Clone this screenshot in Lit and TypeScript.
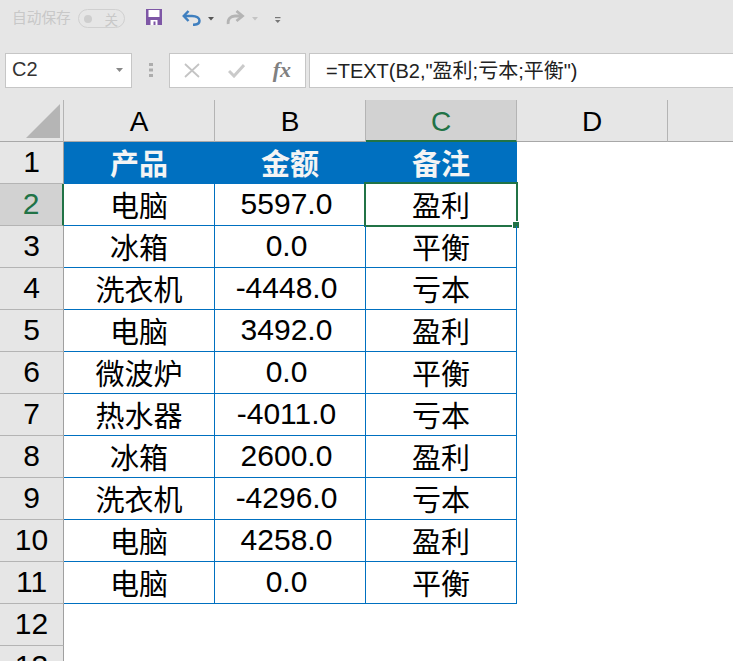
import { LitElement, html, css, svg } from "lit";
import { customElement } from "lit/decorators.js";

const rows: [string, string, string][] = [
  ["电脑", "5597.0", "盈利"],
  ["冰箱", "0.0", "平衡"],
  ["洗衣机", "-4448.0", "亏本"],
  ["电脑", "3492.0", "盈利"],
  ["微波炉", "0.0", "平衡"],
  ["热水器", "-4011.0", "亏本"],
  ["冰箱", "2600.0", "盈利"],
  ["洗衣机", "-4296.0", "亏本"],
  ["电脑", "4258.0", "盈利"],
  ["电脑", "0.0", "平衡"],
];

const icon = (w: number, h: number, body: unknown, cls = "") =>
  html`<svg class=${cls} width=${w} height=${h} viewBox="0 0 ${w} ${h}">${body}</svg>`;

@customElement("app-root")
export class AppRoot extends LitElement {
  static styles = css`
    :host {
      display: block;
      width: 733px;
      height: 661px;
      overflow: hidden;
      background: #fff;
      font-family: "Liberation Sans", "Noto Sans CJK SC", sans-serif;
      color: #000;
    }
    svg { display: block; flex: none; }
    .qat {
      height: 53px;
      background: #e6e6e6;
      display: flex;
      align-items: flex-start;
      padding: 9px 0 0 12px;
      box-sizing: border-box;
    }
    .autosave { font-size: 14.7px; line-height: 18px; color: #c8c8c8; width: 66px; }
    .toggle {
      width: 47px; height: 19px; box-sizing: border-box;
      border: 1px solid #d0d0d0; border-radius: 10px;
      display: flex; align-items: center; justify-content: space-between;
      padding: 0 6px 0 5px; color: #c8c8c8; font-size: 13.5px;
    }
    .dot { width: 8px; height: 8px; border-radius: 50%; background: #cecece; }
    .save { margin-left: 21px; }
    .undo { margin-left: 20px; }
    .c1 { margin-left: 7px; margin-top: 8px; }
    .redo { margin-left: 12px; }
    .c2 { margin-left: 7px; margin-top: 8px; }
    .more { margin-left: 17px; margin-top: 8px; }
    .fbar {
      height: 47px;
      background: #e6e6e6;
      display: flex;
      align-items: flex-start;
      padding-left: 5px;
      box-sizing: border-box;
    }
    .box {
      height: 35px; box-sizing: border-box;
      background: #fff; border: 1px solid #c6c6c6;
      display: flex; align-items: center;
    }
    .name {
      width: 127px; padding: 0 8px 2px 6px; justify-content: space-between;
      font-size: 20px; color: #333;
    }
    .grip { width: 37px; display: flex; justify-content: center; padding-top: 10px; }
    .tools { width: 137px; padding: 0 14px 0 14px; justify-content: space-between; }
    .fx { font-family: "Liberation Serif", serif; font-style: italic; font-weight: bold; font-size: 22px; color: #808080; padding-bottom: 2px; }
    .formula {
      margin-left: 3px; flex: 1; padding: 0 0 2px 16px;
      font-size: 20px; color: #222; border-right: none;
    }
    .sheet {
      display: grid;
      grid-template-columns: 64px 151px 151px 151px 151px 1fr;
      grid-auto-rows: 42px;
      font-size: 30px;
    }
    .cell, .hd {
      box-sizing: border-box;
      display: flex; align-items: center; justify-content: center;
      white-space: nowrap;
    }
    .hd {
      background: #e6e6e6;
      border-right: 1px solid #b4b4b4;
      border-bottom: 1px solid #a8a8a8;
    }
    .col { font-size: 28px; align-items: flex-end; padding-bottom: 3px; border-right-color: #b4b4b4; }
    .row { padding-bottom: 2px; border-right-color: #a0a0a0; border-bottom-color: #b4b4b4; }
    .hd.on { background: #d2d2d2; color: #217346; }
    .col.on { border-bottom: 2px solid #217346; padding-bottom: 2px; }
    .row.on { border-right: 2px solid #217346; }
    .corner { padding: 0; align-items: flex-end; justify-content: flex-end; }
    .corner svg { margin: 0 3px 3px 0; }
    .blank { background: #e6e6e6; border-bottom: 1px solid #a8a8a8; }
    .cell { position: relative; padding-bottom: 2px; }
    .cjk { font-size: 29px; }
    .num { padding-right: 7px; }
    .data { border-right: 1px solid #0070c0; border-bottom: 1px solid #0070c0; }
    .head { background: #0070c0; color: #f4f4f4; font-weight: bold; border-bottom: 0; }
    .sel {
      position: absolute; left: -2px; top: -2px; width: 154px; height: 45px;
      box-sizing: border-box; border: 2px solid #217346; pointer-events: none;
    }
    .handle {
      position: absolute; right: -4px; bottom: -4px; width: 6px; height: 6px;
      background: #217346; border: 1px solid #fff; box-sizing: content-box;
    }
    .empty { background: #fff; }
  `;

  render() {
    const caret = (c: string) => icon(6, 4, svg`<path d="M0 0h6L3 3.500z" fill=${c}/>`);
    return html`
      <div class="qat">
        <span class="autosave">自动保存</span>
        <span class="toggle"><i class="dot"></i><span>关</span></span>
        <span class="save">${icon(16, 16, svg`
          <path d="M0 0h16v16H0z" fill="#7e57a6"/>
          <path d="M2.500 1h11v7h-11z" fill="#fff"/>
          <path d="M4.500 11h7v5h-7z" fill="#fff"/><path d="M7.500 12.500h2V16h-2z" fill="#7e57a6"/>`)}</span>
        <span class="undo">${icon(19, 17, svg`
          <path d="M6.500 2 1.800 7 6.500 12" fill="none" stroke="#3f7fbf" stroke-width="2.500"/>
          <path d="M2 7h8c4.500 0 7.500 2 7.500 4.800S14.500 15.800 11 15.800" fill="none" stroke="#3f7fbf" stroke-width="2.500"/>`)}</span>
        <span class="c1">${caret("#555")}</span>
        <span class="redo">${icon(19, 17, svg`
          <path d="M10.500 2 16.500 7 10.500 12" fill="none" stroke="#b4b4b4" stroke-width="2.800"/>
          <path d="M16 7H9C4.500 7 1.500 10 2.200 15" fill="none" stroke="#b4b4b4" stroke-width="2.800"/>`)}</span>
        <span class="c2">${caret("#c4c4c4")}</span>
        <span class="more">${icon(6, 6, svg`<path d="M0 0h5.500v1.200H0z" fill="#777"/><path d="M0 3h5.500L2.750 6z" fill="#777"/>`)}</span>
      </div>
      <div class="fbar">
        <div class="box name"><span>C2</span>${icon(7, 4, svg`<path d="M0 0h7L3.500 4z" fill="#888"/>`)}</div>
        <div class="grip">${icon(4, 14, svg`<path d="M0 0h4v3H0zM0 5.500h4v3H0zM0 11h4v3H0z" fill="#adadad"/>`)}</div>
        <div class="box tools">
          ${icon(16, 15, svg`<path d="M1 1l14 13M15 1 1 14" stroke="#c4c4c4" stroke-width="1.800" fill="none"/>`)}
          ${icon(17, 15, svg`<path d="M1 8l5 5L16 2" stroke="#cacaca" stroke-width="3" fill="none"/>`)}
          <span class="fx">fx</span>
        </div>
        <div class="box formula">=TEXT(B2,"盈利;亏本;平衡")</div>
      </div>
      <div class="sheet">
        <div class="hd col corner">${icon(34, 34, svg`<path d="M34 0v34H0z" fill="#b5b5b5"/>`)}</div>
        <div class="hd col">A</div>
        <div class="hd col">B</div>
        <div class="hd col on">C</div>
        <div class="hd col">D</div>
        <div class="blank"></div>

        <div class="hd row">1</div>
        <div class="cell data head cjk">产品</div>
        <div class="cell data head cjk">金额</div>
        <div class="cell data head cjk">备注</div>
        <div class="empty"></div><div class="empty"></div>

        ${rows.map((r, i) => html`
          <div class="hd row ${i === 0 ? "on" : ""}">${i + 2}</div>
          <div class="cell data cjk">${r[0]}</div>
          <div class="cell data num">${r[1]}</div>
          <div class="cell data cjk">${r[2]}${i === 0
            ? html`<div class="sel"><div class="handle"></div></div>` : ""}</div>
          <div class="empty"></div><div class="empty"></div>
        `)}
        <div class="hd row">12</div>
        <div class="empty"></div><div class="empty"></div><div class="empty"></div><div class="empty"></div><div class="empty"></div>
        <div class="hd row">13</div>
      </div>
    `;
  }
}
